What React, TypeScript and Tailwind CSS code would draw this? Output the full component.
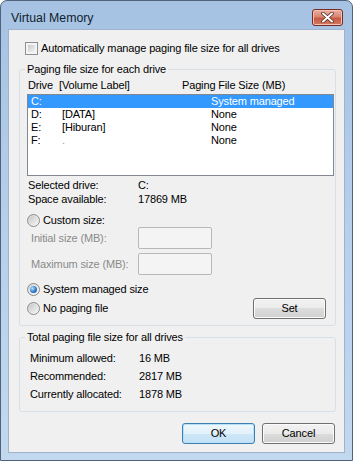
import React from "react";

function Radio({ checked }: { checked?: boolean }) {
  return (
    <span className="w-[13px] h-[13px] rounded-full border border-[#8a8a8a] bg-gradient-to-br from-[#d4d4d4] to-[#fbfbfb] flex items-center justify-center shrink-0">
      {checked ? (
        <span className="w-[7px] h-[7px] rounded-full bg-[radial-gradient(circle_at_35%_35%,#bfe2ff,#2b7bd0_55%,#14508f)]" />
      ) : (
        <span className="w-[9px] h-[9px] rounded-full bg-gradient-to-br from-[#c8c8c8] to-[#f4f4f4]" />
      )}
    </span>
  );
}

function Checkbox() {
  return (
    <span className="w-[13px] h-[13px] border border-[#8e8f8f] bg-[#f4f4f4] p-[2px] shrink-0 flex">
      <span className="block w-full h-full bg-gradient-to-br from-[#c6cacf] to-[#f3f3f3]" />
    </span>
  );
}

function Btn({ children, def }: { children: React.ReactNode; def?: boolean }) {
  return (
    <div
      className={
        def
          ? "h-[21px] w-[73px] rounded-[3px] border border-[#3c7fb1] bg-[linear-gradient(#eef7fd_0%,#e3f1fb_50%,#cfe7f8_50%,#c3e0f5_100%)] shadow-[inset_0_0_0_1px_#b9e1fa] flex items-center justify-center"
          : "h-[21px] w-[73px] rounded-[3px] border border-[#707070] bg-[linear-gradient(#f2f2f2_0%,#ebebeb_50%,#dddddd_50%,#cfcfcf_100%)] shadow-[inset_0_0_0_1px_#fbfbfb] flex items-center justify-center"
      }
    >
      {children}
    </div>
  );
}

function TextBox() {
  return <div className="w-[74px] h-[22px] border border-[#b8b8b8] rounded-[2px] bg-[#f4f4f4]" />;
}

export default function App() {
  const rows = [
    { d: "C:", l: "", s: "System managed", sel: true },
    { d: "D:", l: "[DATA]", s: "None" },
    { d: "E:", l: "[Hiburan]", s: "None" },
    { d: "F:", l: ".", s: "None" },
  ];
  return (
    <div className="w-[353px] h-[461px] flex flex-col rounded-t-[7px] border border-[#50627a] bg-gradient-to-b from-[#a6c2e3] via-[#b6cfeb] to-[#c2d8ef] font-['Liberation_Sans',Arial,sans-serif] text-[11px] tracking-[-0.15px] text-black overflow-hidden">
      {/* Title bar */}
      <div className="h-[28px] flex items-start pl-[10px] pr-[9px] shrink-0">
        <span className="mt-[9px] leading-[16px] text-[12.3px] tracking-[0px] text-[#0f1e2f]">Virtual Memory</span>
        <div className="ml-auto mt-[8px] w-[31px] h-[17px] rounded-[3px] border border-[#7a2c22] bg-[linear-gradient(#eab1a3_0%,#d98572_45%,#c65a43_55%,#d77a61_100%)] shadow-[inset_0_0_0_1px_#f2c2b6] flex items-center justify-center">
          <svg width="13" height="11" viewBox="0 0 13 11">
            <path d="M2 1.5 L11 9.5 M11 1.5 L2 9.5" stroke="#5a2a22" strokeWidth="3.6" strokeLinecap="round" />
            <path d="M2 1.5 L11 9.5 M11 1.5 L2 9.5" stroke="#ffffff" strokeWidth="2" strokeLinecap="round" />
          </svg>
        </div>
      </div>

      {/* Client */}
      <div className="mx-[7px] mb-[7px] flex-1 border border-[#9fb3cb] bg-[#f0f0f0] flex flex-col pt-[12px]">
        <div className="ml-[16px] flex items-center h-[13px] gap-[3px]">
          <Checkbox />
          <span className="leading-[13px]">Automatically manage paging file size for all drives</span>
        </div>

        {/* Group 1 */}
        <fieldset className="mt-[7px] ml-[10px] mr-[8px] border border-[#d5dfe5] rounded-[3px] pb-[6px]">
          <legend className="ml-[5px] px-[2px] leading-[15px]">Paging file size for each drive</legend>
          <div className="mt-[1px] pl-[8px] flex h-[14px] items-center">
            <span className="w-[31px]">Drive</span>
            <span className="w-[123px]">[Volume Label]</span>
            <span>Paging File Size (MB)</span>
          </div>
          <div className="mt-[2px] ml-[7px] mr-[1px] h-[82px] border border-[#828790] bg-white pt-[0px]">
            {rows.map((r) => (
              <div
                key={r.d}
                className={
                  r.sel
                    ? "flex h-[13px] items-center pl-[3px] bg-[#3399ff] text-white"
                    : "flex h-[13px] items-center pl-[3px]"
                }
              >
                <span className="w-[31px]">{r.d}</span>
                <span className={r.l === "." ? "w-[149px] text-[#a0a0a0]" : "w-[149px]"}>{r.l}</span>
                <span>{r.s}</span>
              </div>
            ))}
          </div>
          <div className="mt-[2px] pl-[8px] flex h-[14px] items-center">
            <span className="w-[110px]">Selected drive:</span>
            <span>C:</span>
          </div>
          <div className="pl-[8px] flex h-[14px] items-center">
            <span className="w-[110px]">Space available:</span>
            <span>17869 MB</span>
          </div>
          <div className="mt-[8px] ml-[7px] flex items-center h-[13px] gap-[3px]">
            <Radio />
            <span>Custom size:</span>
          </div>
          <div className="pl-[11px] flex items-center h-[22px] text-[#8a8a8a]">
            <span className="w-[107px]">Initial size (MB):</span>
            <TextBox />
          </div>
          <div className="mt-[4px] pl-[11px] flex items-center h-[22px] text-[#8a8a8a]">
            <span className="w-[107px]">Maximum size (MB):</span>
            <TextBox />
          </div>
          <div className="mt-[8px] ml-[7px] flex items-center h-[13px] gap-[3px]">
            <Radio checked />
            <span>System managed size</span>
          </div>
          <div className="mt-[2px] ml-[7px] mr-[9px] flex items-center h-[21px]">
            <div className="flex items-center gap-[3px]">
              <Radio />
              <span>No paging file</span>
            </div>
            <div className="ml-auto">
              <Btn>Set</Btn>
            </div>
          </div>
        </fieldset>

        {/* Group 2 */}
        <fieldset className="mt-[4px] ml-[10px] mr-[8px] border border-[#d5dfe5] rounded-[3px] pb-[8px]">
          <legend className="ml-[5px] px-[2px] leading-[15px]">Total paging file size for all drives</legend>
          <div className="mt-[4px] pl-[10px] flex h-[18px] items-center">
            <span className="w-[109px]">Minimum allowed:</span>
            <span>16 MB</span>
          </div>
          <div className="pl-[10px] flex h-[18px] items-center">
            <span className="w-[109px]">Recommended:</span>
            <span>2817 MB</span>
          </div>
          <div className="pl-[10px] flex h-[18px] items-center">
            <span className="w-[109px]">Currently allocated:</span>
            <span>1878 MB</span>
          </div>
        </fieldset>

        <div className="mt-[11px] mr-[9px] flex justify-end gap-[7px]">
          <Btn def>OK</Btn>
          <Btn>Cancel</Btn>
        </div>
      </div>
    </div>
  );
}
